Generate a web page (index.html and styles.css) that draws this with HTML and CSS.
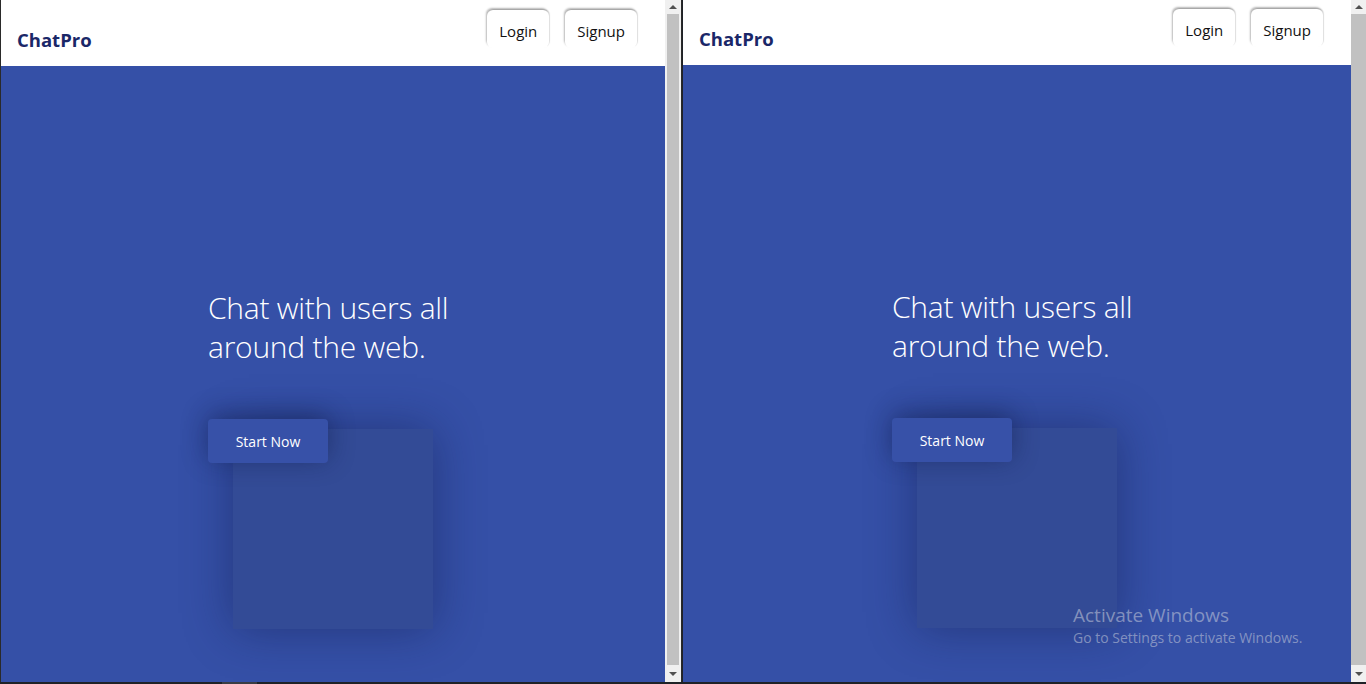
FILE: index.html
```html
<!DOCTYPE html>
<html lang="en">
<head>
<meta charset="utf-8">
<title>ChatPro</title>
<link rel="stylesheet" href="styles.css">
</head>
<body>
<div class="screen">
  <div class="window window-left">
    <div class="page">
      <header class="header">
        <div class="logo">ChatPro</div>
        <nav class="nav">
          <button class="nav-btn">Login</button>
          <button class="nav-btn">Signup</button>
        </nav>
      </header>
      <main class="hero">
        <div class="hero-inner">
          <h1 class="hero-title">Chat with users all around the web.</h1>
          <button class="start-btn">Start Now</button>
          <div class="hero-card"></div>
        </div>
      </main>
    </div>
    <div class="scrollbar scrollbar-wide">
      <div class="sb-arrow"><span class="tri-up"></span></div>
      <div class="sb-thumb"></div>
      <div class="sb-arrow"><span class="tri-down"></span></div>
    </div>
  </div>
  <div class="window window-right">
    <div class="page">
      <header class="header header-short">
        <div class="logo">ChatPro</div>
        <nav class="nav">
          <button class="nav-btn">Login</button>
          <button class="nav-btn">Signup</button>
        </nav>
      </header>
      <main class="hero">
        <div class="hero-inner">
          <h1 class="hero-title">Chat with users all around the web.</h1>
          <button class="start-btn">Start Now</button>
          <div class="hero-card"></div>
        </div>
      </main>
    </div>
    <div class="scrollbar">
      <div class="sb-arrow"><span class="tri-up"></span></div>
      <div class="sb-thumb"></div>
      <div class="sb-arrow"><span class="tri-down"></span></div>
    </div>
  </div>
</div>
<div class="taskbar-edge"><span class="edge-mark"></span></div>
<div class="activate">
  <div class="activate-title">Activate Windows</div>
  <div class="activate-sub">Go to Settings to activate Windows.</div>
</div>
</body>
</html>
```
FILE: styles.css
```css
* { box-sizing: border-box; }
html, body {
  margin: 0;
  padding: 0;
  width: 1366px;
  height: 684px;
  overflow: hidden;
  background: #1f2227;
  font-family: "Open Sans", "Noto Sans", sans-serif;
}
.screen {
  display: flex;
  height: 682px;
}
.window {
  display: flex;
  height: 100%;
  overflow: hidden;
}
.window-left {
  width: 682px;
  border-left: 1px solid #2a2a2a;
}
.window-right {
  width: 683px;
  margin-left: 1px;
}
.page {
  flex: 1;
  display: flex;
  flex-direction: column;
  background: #3550a7;
  min-width: 0;
}
.header {
  height: 66px;
  flex: none;
  background: #ffffff;
  display: flex;
  justify-content: space-between;
  align-items: flex-start;
  padding: 0 28px 0 16px;
}
.header-short { height: 65px; }
.logo {
  padding-top: 27px;
  font-size: 18.5px;
  font-weight: 700;
  color: #1a2768;
}
.header-short .logo { padding-top: 26px; }
.nav {
  display: flex;
  gap: 16px;
  padding-top: 10px;
}
.header-short .nav { padding-top: 9px; }
.nav-btn {
  height: 38px;
  padding: 3px 12px 0;
  border: none;
  background: #ffffff;
  border-radius: 6px;
  font-family: inherit;
  font-size: 15px;
  color: #111111;
  box-shadow: -1px -2px 2px rgba(0,0,0,0.28), 1px -1px 1px rgba(0,0,0,0.12);
}
.hero {
  flex: 1;
  background: #3550a7;
}
.hero-inner {
  width: 250px;
  margin: 0 auto;
  padding-top: 222px;
  display: flex;
  flex-direction: column;
  align-items: flex-start;
}
.hero-title {
  margin: 0;
  font-size: 30px;
  font-weight: 300;
  line-height: 39px;
  color: #ffffff;
  letter-spacing: -0.25px;
}
.start-btn {
  position: relative;
  z-index: 1;
  margin-top: 53px;
  width: 120px;
  height: 44px;
  border: none;
  border-radius: 4px;
  background: #3751a8;
  color: #ffffff;
  font-family: inherit;
  font-size: 14px;
  font-weight: 400;
  box-shadow: 0 -4px 26px rgba(10,20,60,0.45);
}
.hero-card {
  margin-top: -34px;
  margin-left: 25px;
  width: 200px;
  height: 200px;
  background: #334b96;
  box-shadow: 0 0 45px rgba(15,25,70,0.45);
}
.scrollbar {
  width: 15px;
  flex: none;
  display: flex;
  flex-direction: column;
  background: #f0f0f0;
}
.scrollbar-wide {
  width: 17px;
  padding: 0 2px;
  border-right: 1px solid #2a2a2a;
}
.sb-arrow {
  height: 14px;
  flex: none;
  display: flex;
  align-items: center;
  justify-content: center;
  background: #f0f0f0;
}
.sb-arrow:last-child { height: 17px; }
.sb-thumb {
  flex: 1;
  background: #c1c1c1;
}
.tri-up {
  width: 0; height: 0;
  border-left: 4px solid transparent;
  border-right: 4px solid transparent;
  border-bottom: 4px solid #505050;
}
.tri-down {
  width: 0; height: 0;
  border-left: 4px solid transparent;
  border-right: 4px solid transparent;
  border-top: 4px solid #505050;
}
.taskbar-edge {
  height: 2px;
  background: #1f2227;
  display: flex;
  padding-left: 222px;
}
.edge-mark {
  width: 35px;
  height: 2px;
  background: #3a3d44;
}
.activate {
  position: absolute;
  left: 1073px;
  top: 603px;
  color: rgba(200,205,220,0.55);
  font-family: "Open Sans", "Noto Sans", sans-serif;
}
.activate-title {
  font-size: 19px;
  line-height: 25px;
}
.activate-sub {
  font-size: 14px;
  line-height: 20px;
}
```
